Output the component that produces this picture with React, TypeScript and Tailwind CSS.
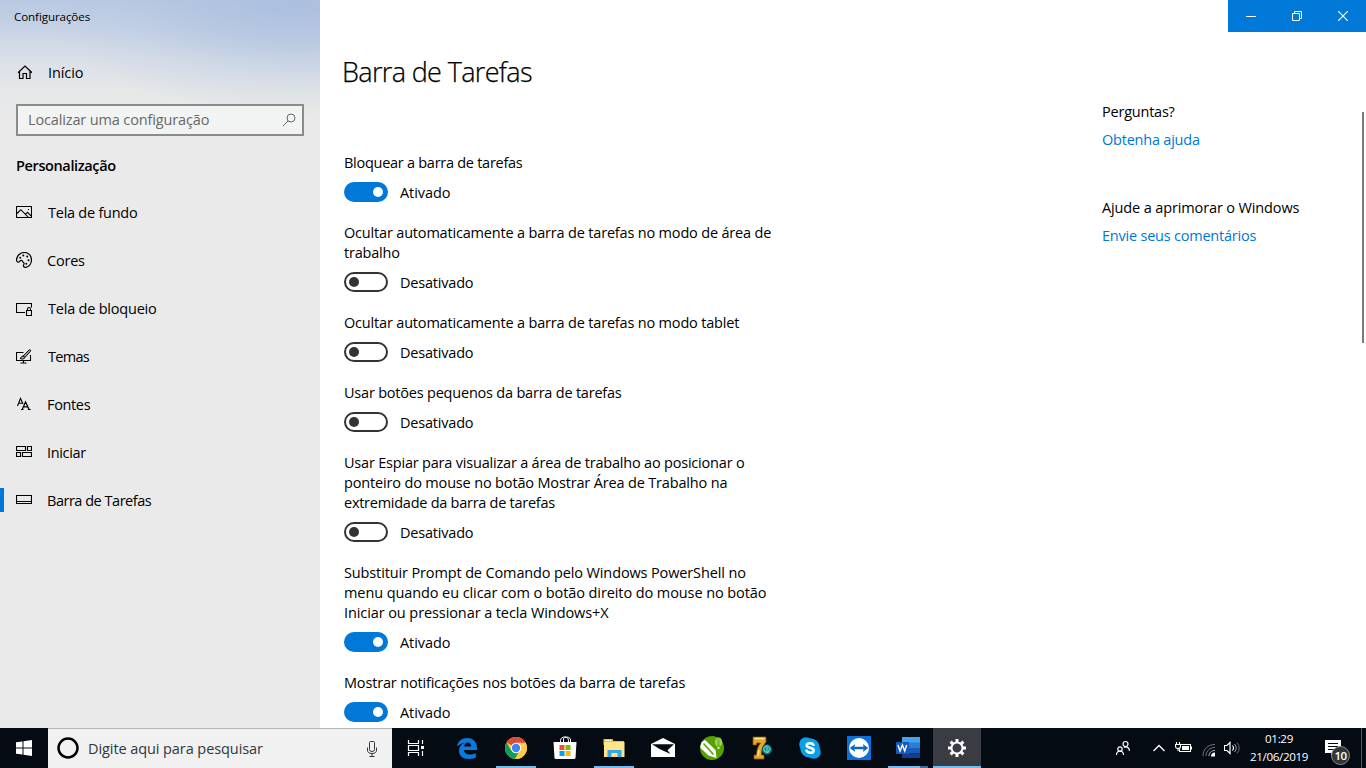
import React from "react";

const FONT = "font-['Open_Sans','Noto_Sans',sans-serif]";

function Icon({ w, h, children, className = "" }: { w: number; h: number; children: React.ReactNode; className?: string }) {
  return (
    <svg width={w} height={h} viewBox={`0 0 ${w} ${h}`} fill="none" stroke="currentColor" strokeWidth="1" className={`block shrink-0 ${className}`}>
      {children}
    </svg>
  );
}

const HomeIcon = () => (
  <Icon w={16} h={16}>
    <path d="M2 8.700 9 2l7 6.700M3.500 7.500v7h3.500v-5h3.500v5H14v-7" strokeWidth="1.200" />
  </Icon>
);
const PictureIcon = () => (
  <Icon w={16} h={16}>
    <path d="M.5 2.500h15v11H.5zM1 9.500l3.800-3.800 7.400 7.400M9.500 10.300l2-2 4 4" strokeWidth="1.100" />
    <path d="M12 5h1v1h-1z" fill="currentColor" stroke="none" />
  </Icon>
);
const PaletteIcon = () => (
  <Icon w={16} h={16}>
    <path d="M8.500.5C4 .5.5 4 .5 8c0 1.700 1.300 2.400 2.300 2 1.200-.4 1.200-1.800 2.600-1.600 1.500.2 1.300 1.700 2.300 2.300 1 .7.200 1.400-.2 2.400-.4 1.200.3 2.300 1.800 2.300 3.500 0 6.200-3.500 6.200-7.500 0-4.300-3-7.400-7-7.400z" strokeWidth="1.200" />
    <g fill="currentColor" stroke="none">
      <circle cx="4.200" cy="5.800" r="1" /><circle cx="7.300" cy="3.600" r="1" /><circle cx="11.200" cy="4.500" r="1" />
      <circle cx="12.500" cy="8.200" r="1" /><circle cx="10.300" cy="11.800" r="1" />
    </g>
  </Icon>
);
const LockScreenIcon = () => (
  <Icon w={16} h={16}>
    <path d="M9 12.500H.5v-9h15v4M10.500 10.500h5v5h-5zM11.500 10.500V9.200c0-2.300 3-2.300 3 0v1.300" strokeWidth="1.100" />
  </Icon>
);
const ThemeIcon = () => (
  <Icon w={16} h={16}>
    <path d="M7.500 4.500h-7v8h14V7M7.500 13v2M4.500 15h6" strokeWidth="1.100" />
    <path d="M7.200 8 13 2c1-.9 2.200.3 1.400 1.300L9 9.400M7 8c-2 .1-1.500 2-3 2.500 2 1 4.700.6 5-1.200z" fill="#aaa" />
  </Icon>
);
const FontIcon = () => (
  <Icon w={16} h={16}>
    <path d="M1.500 10 4.500 2.500 7 8M2.600 7.200h3.400" strokeWidth="1.100" />
    <path d="M6.200 13.500 9.500 6l3.700 7.500M7.300 10.800h4.600M5 13.500h2.500M11.700 13.500h3" strokeWidth="1.200" />
  </Icon>
);
const StartTilesIcon = () => (
  <Icon w={16} h={16}>
    <path d="M.5 2.500h9v4h-9zM11.500 2.500h4v4h-4zM.5 8.500h4v4h-4zM6.500 8.500h9v4h-9z" strokeWidth="1.150" />
  </Icon>
);
const TaskbarIcon = () => (
  <Icon w={16} h={16}>
    <path d="M.5 3.500h15v8H.5zM.5 9.500h15" strokeWidth="1.100" />
  </Icon>
);

const nav = [
  { label: "Tela de fundo", icon: <PictureIcon />, cls: "ml-4 tracking-[-0.25px]" },
  { label: "Cores", icon: <PaletteIcon />, cls: "ml-[15px] tracking-[-0.2px]" },
  { label: "Tela de bloqueio", icon: <LockScreenIcon />, cls: "ml-4 tracking-[-0.21px]" },
  { label: "Temas", icon: <ThemeIcon />, cls: "ml-4 tracking-[-0.7px]" },
  { label: "Fontes", icon: <FontIcon />, cls: "ml-[15px] tracking-[-0.35px]" },
  { label: "Iniciar", icon: <StartTilesIcon />, cls: "ml-[15px] tracking-[-0.35px]" },
  { label: "Barra de Tarefas", icon: <TaskbarIcon />, cls: "ml-[15px] tracking-[-0.48px]", active: true },
];

const settings: { lines: [string, string][]; on: boolean }[] = [
  { lines: [["Bloquear a barra de tarefas", "tracking-[-0.27px]"]], on: true },
  { lines: [["Ocultar automaticamente a barra de tarefas no modo de área de", "tracking-[-0.18px]"], ["trabalho", "tracking-[-0.2px]"]], on: false },
  { lines: [["Ocultar automaticamente a barra de tarefas no modo tablet", "tracking-[-0.18px]"]], on: false },
  { lines: [["Usar botões pequenos da barra de tarefas", "tracking-[-0.21px]"]], on: false },
  { lines: [["Usar Espiar para visualizar a área de trabalho ao posicionar o", "tracking-[-0.2px]"], ["ponteiro do mouse no botão Mostrar Área de Trabalho na", "tracking-[-0.16px]"], ["extremidade da barra de tarefas", "tracking-[-0.26px]"]], on: false },
  { lines: [["Substituir Prompt de Comando pelo Windows PowerShell no", "tracking-[-0.13px]"], ["menu quando eu clicar com o botão direito do mouse no botão", "tracking-[-0.09px]"], ["Iniciar ou pressionar a tecla Windows+X", "tracking-[-0.09px]"]], on: true },
  { lines: [["Mostrar notificações nos botões da barra de tarefas", "tracking-[-0.17px]"]], on: true },
];

function Toggle({ on }: { on: boolean }) {
  return on ? (
    <span className="flex h-5 w-11 items-center justify-end rounded-full bg-[#0078d7] pr-[5px]">
      <span className="size-[10px] rounded-full bg-white" />
    </span>
  ) : (
    <span className="flex h-5 w-11 items-center rounded-full border-2 border-[#333] pl-[3px]">
      <span className="size-[10px] rounded-full bg-[#333]" />
    </span>
  );
}

function Sidebar() {
  return (
    <aside className="flex w-80 shrink-0 flex-col bg-[#eaeaea] bg-[radial-gradient(ellipse_250px_105px_at_300px_10px,rgba(160,184,220,0.6),rgba(166,188,221,0.48)_35%,rgba(175,195,224,0.2)_70%,transparent),linear-gradient(180deg,#b9c9e2_0px,#c6d2e5_28px,#dadfe8_58px,#e5e7e8_90px,#eaeaea_125px)] text-[14.5px] leading-5 text-black">
      <div className="h-[33px] pl-[14px] text-[11.600px] leading-[34px] tracking-[-0.1px]">Configurações</div>
      <div className="mt-[15px] flex h-12 items-center pl-4"><HomeIcon /><span className="ml-4 pt-[2px] tracking-[-0.1px]">Início</span></div>
      <div className="mx-4 mt-2 flex h-8 items-center justify-between border-2 border-[#8b8c8d] bg-[#f2f3f3] pl-[10px] pr-[6px] text-[#686868]">
        <span className="tracking-[-0.14px]">Localizar uma configuração</span>
        <Icon w={14} h={14}><circle cx="9" cy="5" r="4" /><path d="M6 8 1 13" /></Icon>
      </div>
      <div className="mt-[19px] h-[33px] pl-4 font-semibold leading-[22px] tracking-[-0.38px]">Personalização</div>
      <nav>
        {nav.map((n) => (
          <div key={n.label} className="flex h-12 items-center">
            <span className={`h-6 w-1 ${n.active ? "bg-[#0078d7]" : ""}`} />
            <span className="ml-3">{n.icon}</span>
            <span className={`pt-[2px] ${n.cls}`}>{n.label}</span>
          </div>
        ))}
      </nav>
    </aside>
  );
}

function WindowButtons() {
  return (
    <div className="flex h-8 w-[138px] bg-[#0078d7] text-white">
      <span className="flex w-[46px] items-center justify-center"><Icon w={10} h={10}><path d="M0 5.500h10" /></Icon></span>
      <span className="flex w-[46px] items-center justify-center"><Icon w={10} h={10}><path d="M.5 2.500h7v7h-7zM2.500 2.500v-2h7v7h-2" /></Icon></span>
      <span className="flex w-[46px] items-center justify-center"><Icon w={10} h={10}><path d="m0 0 10 10M10 0 0 10" strokeWidth="1.200" /></Icon></span>
    </div>
  );
}

function Main() {
  return (
    <main className="flex min-w-0 flex-1 bg-white text-[14.5px] leading-5 text-black">
      <div className="flex w-[760px] flex-col overflow-hidden pl-6">
        <h1 className="-ml-[2px] mt-[52px] h-[101px] shrink-0 text-[27px] font-light leading-10 tracking-[-0.65px] [-webkit-text-stroke:0.25px_black]">Barra de Tarefas</h1>
        {settings.map((s) => (
          <section key={s.lines[0][0]} className="mb-[21px] shrink-0">
            {s.lines.map(([text, tracking]) => <p key={text} className={`h-5 whitespace-nowrap ${tracking}`}>{text}</p>)}
            <div className="mt-[9px] flex h-5 items-center"><Toggle on={s.on} /><span className={`ml-3 mt-px ${s.on ? "tracking-[-0.05px]" : "tracking-[-0.2px]"}`}>{s.on ? "Ativado" : "Desativado"}</span></div>
          </section>
        ))}
      </div>
      <div className="flex flex-1 flex-col">
        <div className="flex justify-end"><WindowButtons /></div>
        <div className="flex flex-1">
          <div className="flex-1 pl-[22px] pt-[70px] tracking-[-0.22px]">
            <p>Perguntas?</p>
            <p className="mt-2 text-[#0078d7]">Obtenha ajuda</p>
            <p className="mt-12 tracking-[-0.13px]">Ajude a aprimorar o Windows</p>
            <p className="mt-2 text-[#0078d7]">Envie seus comentários</p>
          </div>
          <div className="mr-[2px] mt-20 h-[231px] w-[2px] bg-[#7a7a7a]" />
        </div>
      </div>
    </main>
  );
}

const Edge = () => (
  <Icon w={22} h={22}>
    <path stroke="none" fill="#0a7ae0" d="M1 9.800C1.700 4.200 6 1 11.200 1 17 1 21 5.200 21 10.700V13H8c.2 3.200 2.700 4.500 6 4.500 2.300 0 4.200-.5 5.800-1.500v4.500A14.700 14.700 0 0 1 12.500 22C6.700 22 3 18.700 3 14c0-3.800 2-6.500 5.500-8C5.500 6.200 3 7.600 1 9.800zM8 9.500h7.200C15.200 6.800 13.800 5.500 11.700 5.500 9.700 5.500 8.300 7.200 8 9.500z" />
  </Icon>
);
const Chrome = () => (
  <Icon w={24} h={24}>
    <g stroke="none">
      <circle cx="12" cy="12" r="11" fill="#ffcd42" />
      <path d="M12 12 2.500 6.500A11 11 0 0 1 21.700 7H12z" fill="#db4c3f" />
      <path d="M2.500 6.500A11 11 0 0 0 11 23l5-9-9 0z" fill="#109d59" />
      <path d="M12 6.800h9.600A11 11 0 0 1 11 23l5.500-9z" fill="#ffcd42" />
      <circle cx="12" cy="12" r="5.200" fill="#fff" /><circle cx="12" cy="12" r="4.200" fill="#4284f3" />
    </g>
  </Icon>
);
const Store = () => (
  <Icon w={24} h={24}>
    <path d="M7.500 6V4.500c0-4.500 8-5 8 0V6M10.500 6V3c0-2.500 7-3 7 1v2" stroke="#fff" />
    <path d="M.5 6h23l-1 16q-.2 1-1.200 1H2.700q-1 0-1.200-1z" fill="#fff" stroke="none" />
    <g stroke="none"><path d="M6.500 9h5v5h-5z" fill="#f25022" /><path d="M12.500 9h5v5h-5z" fill="#7fba00" /><path d="M6.500 15h5v5h-5z" fill="#00a4ef" /><path d="M12.500 15h5v5h-5z" fill="#ffb900" /></g>
  </Icon>
);
const Folder = () => (
  <Icon w={24} h={24}>
    <g stroke="none"><path d="M1.500 3h9l1 2H22v4H1.500z" fill="#f5bd3a" /><path d="M3 4h6v1H3z" fill="#fff0b8" /><path d="M2 6h20.500v15H2z" fill="#ffe48b" /><path d="M5.500 14h14v7h-4v-4h-6v4h-4z" fill="#35a9df" /></g>
  </Icon>
);
const Mail = () => (
  <Icon w={24} h={24}>
    <path stroke="none" fill="#fff" d="M0 8 12 2l12 6v13H0z" /><path stroke="none" fill="#050b12" d="M1 8.300h22l-6.500 6L19.500 18 8.500 13z" />
  </Icon>
);
const Corel = () => (
  <Icon w={24} h={24}>
    <circle cx="12" cy="12" r="12" fill="#57a000" stroke="none" />
    <path d="M.5 10 1.500 6.500 5 4l10.500 10 1 8-8-2.500L.5 12z" fill="#fff" stroke="none" />
    <path d="m3.500 7.500 10 11" stroke="#57a000" strokeWidth="1.500" />
    <ellipse cx="18.500" cy="6" rx="3.400" ry="4.500" fill="#a7dd67" stroke="none" /><path d="M18.500 1.500v9M17 2l.5 8M20 2l-.5 8" stroke="#5ba60a" strokeWidth=".6" /><path d="M17.500 11h2v2h-2z" fill="#d5f0ae" stroke="none" />
  </Icon>
);
const Seven = () => (
  <Icon w={24} h={24}>
    <path d="M4 1h13v5c-3.500 4-4.500 9-4.500 13h2.500v4H5v-4h2.500c0-5 1.500-9 4-12H7.500v2H4z" fill="#e5a82b" stroke="#8b5008" strokeWidth=".8" />
    <path d="M5.500 2.500h10M10 14l-1 6" stroke="#ffed8f" strokeWidth="1.500" />
    <circle cx="18" cy="13.500" r="4.800" fill="#168f98" stroke="#07545c" /><path d="m14.500 12 3.500-2.500 3 3-2 4-3.500-1zM18 10v7" stroke="#6cd4c9" />
  </Icon>
);
const Skype = () => (
  <Icon w={24} h={24}>
    <g stroke="none" fill="#0a9fe9"><circle cx="8" cy="8" r="6.800" /><circle cx="16" cy="16" r="6.800" /><circle cx="12" cy="12" r="9.800" /></g>
    <path d="M15.500 8.800C14.500 7 9 6.500 8.700 9.400c-.2 3 7 1.800 7 5 0 3.200-6 3-7.200.2" stroke="#fff" strokeWidth="2.500" strokeLinecap="round" />
  </Icon>
);
const TeamViewer = () => (
  <Icon w={24} h={24}>
    <path d="M0 0h24v24H0z" fill="#0c6fda" stroke="none" /><circle cx="12" cy="12" r="10" fill="#fff" stroke="none" />
    <path d="m2.700 12 5.500-4-.8 2.800h9.200L15.800 8l5.500 4-5.500 4 .8-2.800H7.400l.8 2.800z" fill="#0868ca" stroke="none" />
  </Icon>
);
const Word = () => (
  <Icon w={24} h={24}>
    <g stroke="none"><path d="M6 1h18v6H6z" fill="#41a5ee" /><path d="M6 6.500h18V12H6z" fill="#2b7cd3" /><path d="M6 12h18v5.500H6z" fill="#185abd" /><path d="M6 17.500h18V22H6z" fill="#103f91" /><path d="M0 6h13v12H0z" fill="#1759b8" /></g>
    <path d="m2 9 2 6 2.400-6L8.700 15l2-6" stroke="#fff" strokeWidth="1.400" />
  </Icon>
);
const Gear = () => (
  <Icon w={20} h={20}>
    <g fill="#fff" stroke="none">{[0, 45, 90, 135, 180, 225, 270, 315].map((a) => <path key={a} d="M8.500 1h3v3.500h-3z" transform={`rotate(${a} 10 10)`} />)}</g>
    <circle cx="10" cy="10" r="5.500" stroke="#fff" strokeWidth="2" />
  </Icon>
);

const apps: { name: string; icon: React.ReactNode; bar?: string }[] = [
  { name: "edge", icon: <Edge /> }, { name: "chrome", icon: <Chrome />, bar: "w-10" }, { name: "store", icon: <Store /> },
  { name: "explorer", icon: <Folder />, bar: "w-10" }, { name: "mail", icon: <Mail /> }, { name: "corel", icon: <Corel /> },
  { name: "seven", icon: <Seven /> }, { name: "skype", icon: <Skype /> }, { name: "teamviewer", icon: <TeamViewer /> },
  { name: "word", icon: <Word />, bar: "w-10 border-r-8 border-[#3f6d97]" }, { name: "settings", icon: <Gear />, bar: "w-12" },
];

function Taskbar() {
  return (
    <footer className="flex h-10 shrink-0 bg-[#050b12] text-white">
      <div className="flex w-12 items-center justify-center">
        <Icon w={16} h={16}><path fill="#fff" stroke="none" d="m0 2.300 6.500-.9v6.100H0zM7.500 1.200 16 0v7.500H7.500zM0 8.500h6.500v6.100L0 13.700zM7.500 8.500H16V16l-8.500-1.200z" /></Icon>
      </div>
      <div className="flex w-[344px] items-center border-t border-[#b6b6b6] bg-[#f1f1f1] pl-[9px] text-[14.5px] text-[#2f3740]">
        <Icon w={22} h={22} className="-mt-px"><circle cx="11" cy="11" r="9.500" stroke="#000" strokeWidth="2.500" /></Icon>
        <span className="ml-[9px] flex-1 tracking-[-0.08px]">Digite aqui para pesquisar</span>
        <Icon w={12} h={18} className="mr-[14px]"><path d="M3.500 2.500q0-1 1-1h3q1 0 1 1v7q0 2-2.500 2t-2.500-2zM1.500 7.500V10q0 3.500 4.500 3.500T10.500 10V7.500M6 13.500v3M3.500 16.500h5" /></Icon>
      </div>
      <div className="mr-[3px] flex w-12 items-center justify-center">
        <Icon w={18} h={18}><path d="M1.500 1v3.500h10V1M1.500 17v-3.500h10V17M1.500 6.500h10v5h-10zM15.500 1v4M15.500 12v5" strokeWidth="1.200" /><path d="M14 7h3v3h-3z" fill="#fff" stroke="none" /></Icon>
      </div>
      <div className="flex gap-px">
        {apps.map((a) => (
          <div key={a.name} className={`flex h-10 w-12 flex-col items-center ${a.name === "settings" ? "bg-[#393c42]" : ""}`}>
            <span className="flex h-[38px] items-center pt-[2px]">{a.icon}</span>
            {a.bar && <span className={`h-[2px] bg-[#76b9ed] ${a.bar}`} />}
          </div>
        ))}
      </div>
      <div className="flex flex-1 items-center justify-end">
        <Icon w={16} h={16} className="mr-[22px]"><circle cx="10.500" cy="4" r="2.500" strokeWidth="1.200" /><circle cx="5" cy="9" r="2.200" strokeWidth="1.200" /><path d="M1.500 15c0-5 7-5 7 0M9 7.500c2.500-1.500 5.500 0 5.500 3.500" strokeWidth="1.200" /></Icon>
        <Icon w={12} h={8} className="mr-[10px]"><path d="m.5 7 5.500-5.500L11.500 7" strokeWidth="1.300" /></Icon>
        <Icon w={17} h={14} className="mr-[10px]"><path d="M6 3.500h9.500v7H4.500V8M16.500 5.500v3M.5 3.500h5v2q0 2-2.500 2t-2.500-2zM1.500 3V1M4.500 3V1M3 7.500V10" strokeWidth="1.100" /><path d="M7 5h7v4H7z" fill="#fff" stroke="none" /></Icon>
        <Icon w={14} h={14} className="mr-2 mt-[3px]"><path d="M1 13C1 6 6 1.500 13 1.500M4 13c0-5 4-8.500 9-8.500" stroke="#717579" /><path d="M7 13c0-3.500 2.500-5.500 6-5.500" stroke="#b7b9bb" /><path d="M9 13.500c0-2.500 1.500-4 4-4v4z" fill="#fff" stroke="none" /></Icon>
        <Icon w={17} h={14} className="mr-[8px]"><path d="M.5 4.500H3l3-3v11l-3-3H.5zM8.500 4.500q2 2.500 0 5" strokeWidth="1.200" /><path d="M10.500 3q3.500 4 0 8" stroke="#a0a2a5" /><path d="M13 1.500q4.500 5.500 0 11" stroke="#65696d" /></Icon>
        <div className="w-[60px] whitespace-nowrap text-center text-[11.600px] leading-[18px] tracking-[-0.35px]"><div>01:29</div><div>21/06/2019</div></div>
        <div className="relative ml-4 mr-[11px] mt-2 h-6 w-[25px]">
          <Icon w={16} h={17}><path d="M0 0h16v13H9l-3 3.500V13H0z" fill="#fff" stroke="none" /><path d="M3 3.500h10M3 6.500h10M3 9.500h7" stroke="#050b12" /></Icon>
          <span className="absolute left-[6px] top-[6px] flex size-[19px] items-center justify-center rounded-full border border-[#85888b] bg-[#333638] text-[11.500px] font-semibold tracking-[-0.6px]">10</span>
        </div>
        <div className="h-10 w-[5px] border-l border-[#565a5f]" />
      </div>
    </footer>
  );
}

export default function App() {
  return (
    <div className={`flex h-[768px] w-[1366px] flex-col overflow-hidden ${FONT}`}>
      <div className="flex h-[728px] overflow-hidden"><Sidebar /><Main /></div>
      <Taskbar />
    </div>
  );
}
